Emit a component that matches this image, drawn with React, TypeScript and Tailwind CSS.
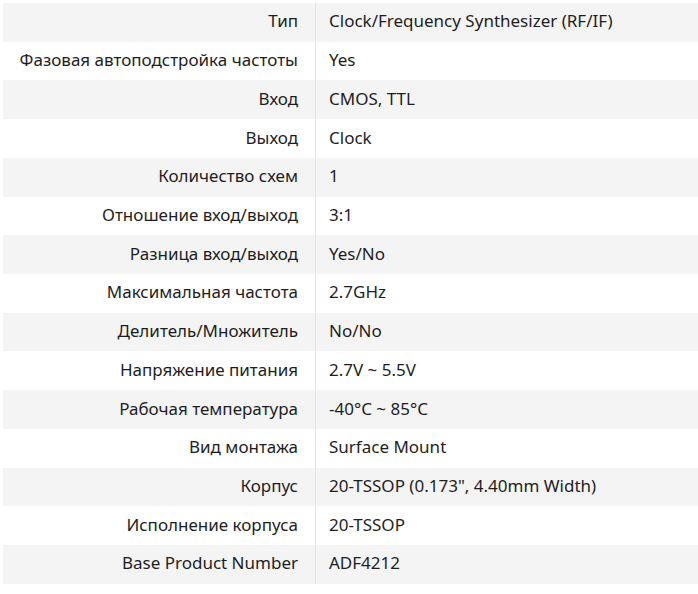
const rows: [string, string][] = [
  ['Тип', 'Clock/Frequency Synthesizer (RF/IF)'],
  ['Фазовая автоподстройка частоты', 'Yes'],
  ['Вход', 'CMOS, TTL'],
  ['Выход', 'Clock'],
  ['Количество схем', '1'],
  ['Отношение вход/выход', '3:1'],
  ['Разница вход/выход', 'Yes/No'],
  ['Максимальная частота', '2.7GHz'],
  ['Делитель/Множитель', 'No/No'],
  ['Напряжение питания', '2.7V ~ 5.5V'],
  ['Рабочая температура', '-40°C ~ 85°C'],
  ['Вид монтажа', 'Surface Mount'],
  ['Корпус', '20-TSSOP (0.173", 4.40mm Width)'],
  ['Исполнение корпуса', '20-TSSOP'],
  ['Base Product Number', 'ADF4212'],
];

export default function App() {
  return (
    <div className="w-[698px] h-[594px] bg-white pt-[3px] pl-[3px]">
      <div
        className="flex flex-col text-[17px] leading-[20px] text-[#1e1e1e]"
        style={{ fontFamily: "'Noto Sans', sans-serif" }}
      >
        {rows.map(([k, v], i) => (
          <div
            key={k}
            className={`flex h-[38.73px] ${i % 2 === 0 ? 'bg-[#f4f4f4]' : 'bg-white'}`}
          >
            <div className="w-[313px] h-full flex items-center justify-end pr-[17px] pb-[2px] border-r border-[#e5e5e5]">
              {k}
            </div>
            <div className="flex-1 flex items-center pl-[13px] pb-[2px]">{v}</div>
          </div>
        ))}
      </div>
    </div>
  );
}
